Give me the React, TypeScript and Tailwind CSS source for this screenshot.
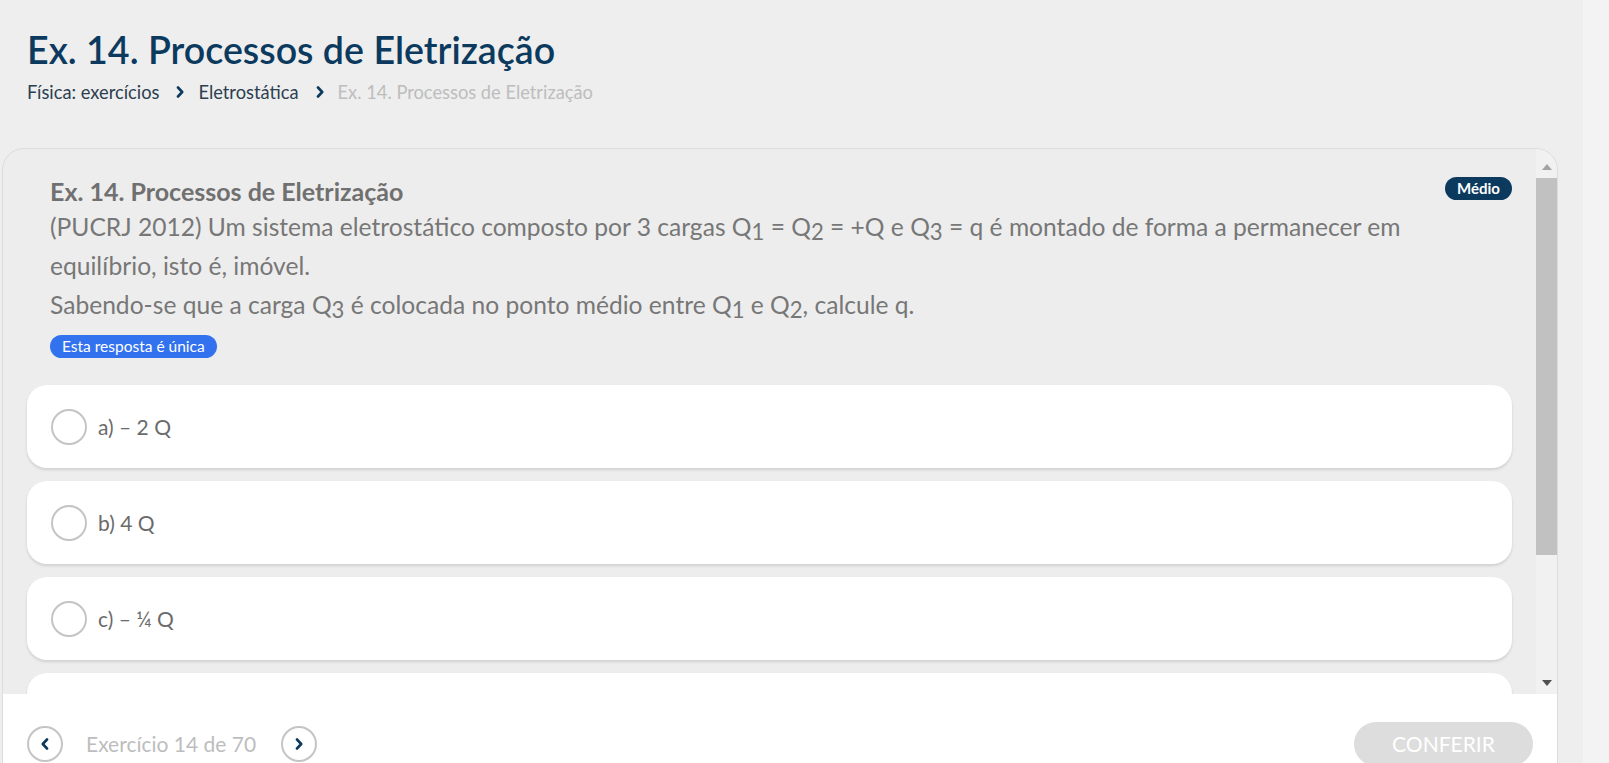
import React from 'react';

const options = ['a) – 2 Q', 'b) 4 Q', 'c) – ¼ Q', ''];

function Crumb({ label, muted }: { label: string; muted?: boolean }) {
  return (
    <span className={muted ? 'text-[#bdbdbd]' : 'text-[#2d3e50]'}>{label}</span>
  );
}

function Chevron({ dir = 'right', className = '' }: { dir?: 'left' | 'right'; className?: string }) {
  return (
    <svg viewBox="0 0 8 12" className={className} fill="none">
      <path
        d={dir === 'right' ? 'M2 1.5 L6.2 6 L2 10.5' : 'M6 1.5 L1.8 6 L6 10.5'}
        stroke="#0b3a5e"
        strokeWidth="2.6"
        strokeLinecap="round"
        strokeLinejoin="round"
      />
    </svg>
  );
}

function Q({ n }: { n: number }) {
  return (
    <>
      Q<sub className="text-[0.9em] bottom-[-4px]">{n}</sub>
    </>
  );
}

export default function App() {
  return (
    <div className="flex h-[763px] w-full overflow-hidden bg-[#eeeeee] font-['Lato',sans-serif]">
      <div className="flex min-w-0 flex-1 flex-col pl-[2px] pr-[25px]">
        {/* Page header */}
        <div className="pl-[25px] pt-[28px]">
          <h1 className="text-[37.6px] font-semibold leading-[44px] text-[#0b3a5e]">
            Ex. 14. Processos de Eletrização
          </h1>
          <nav className="mt-[9px] flex items-center text-[18.3px] leading-[22px]">
            <Crumb label="Física: exercícios" />
            <Chevron className="ml-[17px] mr-[14px] h-[12px] w-[8px]" />
            <Crumb label="Eletrostática" />
            <Chevron className="ml-[17px] mr-[14px] h-[12px] w-[8px]" />
            <Crumb label="Ex. 14. Processos de Eletrização" muted />
          </nav>
        </div>

        {/* Exercise card */}
        <div className="mt-[45px] flex h-[640px] shrink-0 flex-col overflow-hidden rounded-t-[22px] border border-[#dcdcdc] bg-[#ededed]">
          <div className="flex h-[545px] shrink-0">
            <div className="min-w-0 flex-1 overflow-hidden px-[24px] pt-[26px]">
              <div className="pl-[23px]">
                <div className="flex items-start justify-between">
                  <h2 className="text-[25px] font-bold leading-[32px] text-[#707070]">
                    Ex. 14. Processos de Eletrização
                  </h2>
                  <span className="mt-[2px] rounded-full bg-[#0b3a5e] px-[12px] py-[2px] text-[15px] font-bold leading-[19px] text-white">
                    Médio
                  </span>
                </div>
                <div className="text-[24.6px] leading-[39px] text-[#777777]">
                  <p>
                    (PUCRJ 2012) Um sistema eletrostático composto por 3 cargas <Q n={1} /> = <Q n={2} /> = +Q e{' '}
                    <Q n={3} /> = q é montado de forma a permanecer em
                    <br />
                    equilíbrio, isto é, imóvel.
                  </p>
                  <p>
                    Sabendo-se que a carga <Q n={3} /> é colocada no ponto médio entre <Q n={1} /> e <Q n={2} />,
                    calcule q.
                  </p>
                </div>
                <span className="mt-[11px] inline-block rounded-full bg-[#3272ee] px-[12px] text-[15.5px] leading-[23px] text-white">
                  Esta resposta é única
                </span>
              </div>

              <div className="mt-[27px] flex flex-col gap-[13px]">
                {options.map((o, i) => (
                  <div
                    key={i}
                    className="flex h-[83px] shrink-0 items-center gap-[11px] rounded-[20px] bg-white pl-[24px] shadow-[0_2px_3px_rgba(0,0,0,0.12)]"
                  >
                    {o && (
                      <>
                        <div className="h-[36px] w-[36px] rounded-full border-2 border-[#c4c4c4] bg-white" />
                        <span className="text-[21px] text-[#6b6b6b]">{o}</span>
                      </>
                    )}
                  </div>
                ))}
              </div>
            </div>

            {/* Scrollbar */}
            <div className="flex w-[21px] shrink-0 flex-col bg-[#f1f1f1]">
              <div className="flex h-[29px] items-center justify-center pt-[6px]">
                <svg viewBox="0 0 10 6" className="h-[6px] w-[10px]">
                  <path d="M0 6 L5 0 L10 6 Z" fill="#a3a3a3" />
                </svg>
              </div>
              <div className="h-[377px] bg-[#c1c1c1]" />
              <div className="flex-1" />
              <div className="flex h-[22px] items-center justify-center">
                <svg viewBox="0 0 10 6" className="h-[6px] w-[10px]">
                  <path d="M0 0 L10 0 L5 6 Z" fill="#505050" />
                </svg>
              </div>
            </div>
          </div>

          {/* Footer */}
          <div className="flex flex-1 items-start justify-between bg-white px-[24px] pt-[28px]">
            <div className="flex h-[44px] items-center">
              <button className="flex h-[36px] w-[36px] items-center justify-center rounded-full border-2 border-[#c4c4c4]">
                <Chevron dir="left" className="h-[12px] w-[8px]" />
              </button>
              <span className="ml-[23px] mr-[25px] text-[21px] text-[#bdbdbd]">Exercício 14 de 70</span>
              <button className="flex h-[36px] w-[36px] items-center justify-center rounded-full border-2 border-[#c4c4c4]">
                <Chevron className="h-[12px] w-[8px]" />
              </button>
            </div>
            <button className="h-[44px] w-[179px] rounded-full bg-[#dddddd] text-[21px] text-white">CONFERIR</button>
          </div>
        </div>
      </div>
      <div className="w-[26px] shrink-0 bg-[#f3f3f3]" />
    </div>
  );
}
